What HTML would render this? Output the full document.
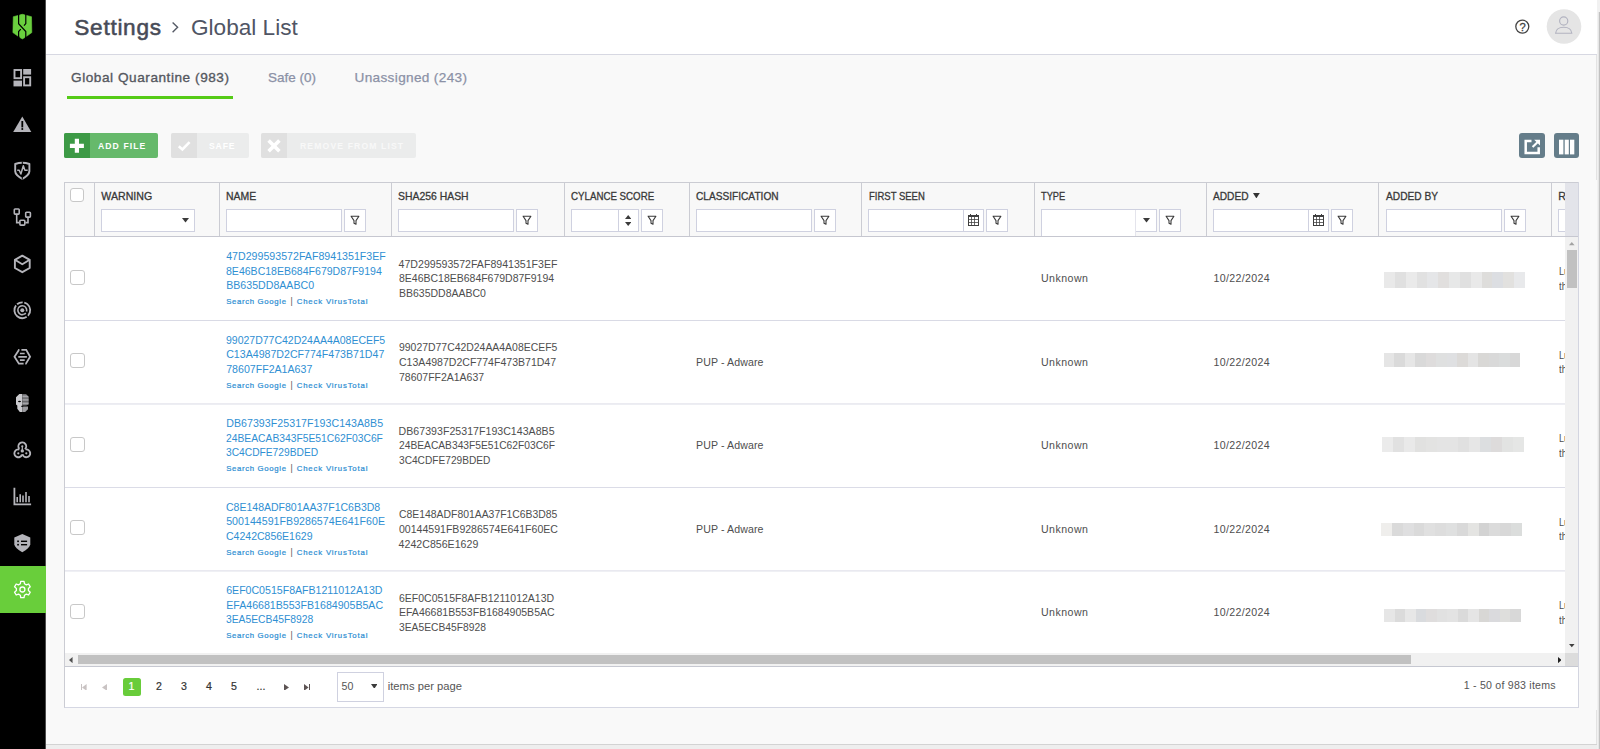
<!DOCTYPE html>
<html lang="en">
<head>
<meta charset="utf-8">
<title>Settings - Global List</title>
<style>
html,body{margin:0;padding:0;}
body{width:1600px;height:749px;overflow:hidden;position:relative;background:#f9f9f9;font-family:"Liberation Sans", sans-serif;}
.t{position:absolute;white-space:nowrap;line-height:20px;transform-origin:0 50%;}
.a{position:absolute;box-sizing:border-box;}

#side{left:0;top:0;width:45px;height:749px;background:#000;border-right:1px solid #4d4d4d;box-sizing:content-box;}
#side .act{left:0;top:566px;width:46px;height:47px;background:#69ce3b;}
#hdr{left:46px;top:0;width:1551px;height:55px;background:#fff;border-bottom:1px solid #d7d8e2;}
#pscroll{left:1597px;top:0;width:3px;height:749px;background:#f1f1f1;}
#pscroll i{position:absolute;left:1px;top:12px;width:2px;height:737px;background:linear-gradient(90deg,#e6e6e6 50%,#c1c1c1 50%);}
#cedge{left:1596px;top:55px;width:1px;height:689px;background:#e3e3e3;}
#foot{left:46px;top:744px;width:1551px;height:5px;border-top:1px solid #d3d3d3;background:#eeeeee;}
#tabline{left:67px;top:96px;width:165.6px;height:3px;background:#55cb17;}
.btn{top:133px;height:25px;border-radius:2px;overflow:hidden;}
.btn i{position:absolute;left:0;top:0;width:26px;height:25px;}
#grid{left:64px;top:182px;width:1515px;height:526px;border:1px solid #cbccd3;border-bottom-color:#d5d7e3;background:#fff;}
#ghead{left:65px;top:183px;width:1500px;height:53px;background:#f8f8f8;}
#gheadline{left:65px;top:236px;width:1513px;height:1px;background:#c6c7d0;}
#gspacer{left:1565px;top:183px;width:13px;height:53px;background:#e3e4ea;}
.cb{width:1px;top:183px;height:53px;background:#cbccd3;}
.rl{left:65px;width:1500px;height:1px;background:#dddde7;}
.chk{left:70px;width:15px;height:15px;border:1px solid #c8c8c8;border-radius:3px;background:#fff;}
.inp{top:209px;height:23px;background:#fff;border:1px solid #cfd1e0;}
.fb{top:209px;height:23px;width:22px;background:#fff;border:1px solid #cfd1e0;}
.fb svg{position:absolute;left:5px;top:5px;}
.px{position:absolute;top:0;height:100%;}
#vscroll{left:1565px;top:237px;width:13px;height:416px;background:#f1f1f1;}
#vscroll i{position:absolute;left:2px;top:13px;width:9.5px;height:38px;background:#c1c1c1;}
#hscroll{left:65px;top:653px;width:1500px;height:13px;background:#f1f1f1;}
#hscroll i{position:absolute;left:13px;top:2px;width:1333px;height:9px;background:#c1c1c1;}
#corner{left:1565px;top:653px;width:13px;height:13px;background:#dcdcdc;}
#pgline{left:65px;top:666px;width:1513px;height:1px;background:#c6c8d1;}
#pg1{left:122.5px;top:677.5px;width:18px;height:18px;border-radius:2.5px;background:#68cc3a;}
#pgsel{left:337px;top:672px;width:47px;height:30px;border:1px solid #cfd1e0;background:#fff;}

</style>
</head>
<body>
<div id="side" class="a"><div class="act a"></div></div>
<div id="hdr" class="a"></div>
<div id="foot" class="a"></div>
<div id="cedge" class="a"></div><div id="pscroll" class="a"><i></i></div>
<div id="tabline" class="a"></div>
<div class="a btn" style="left:64px;width:94px;background:#66b96b"><i style="background:#3d9a46"></i></div>
<div class="a btn" style="left:171px;width:78px;background:#ebecec"><i style="background:#e0e0e0"></i></div>
<div class="a btn" style="left:261px;width:155px;background:#ebecec"><i style="background:#e0e0e0"></i></div>
<div class="a" style="left:1519px;top:133px;width:26px;height:25px;border-radius:3px;background:#657d8a"></div>
<div class="a" style="left:1554px;top:133px;width:25px;height:25px;border-radius:3px;background:#657d8a"></div>
<div id="grid" class="a"></div><div id="ghead" class="a"></div>
<div class="a cb" style="left:94px"></div>
<div class="a cb" style="left:219px"></div>
<div class="a cb" style="left:391px"></div>
<div class="a cb" style="left:564px"></div>
<div class="a cb" style="left:689px"></div>
<div class="a cb" style="left:861px"></div>
<div class="a cb" style="left:1034px"></div>
<div class="a cb" style="left:1206px"></div>
<div class="a cb" style="left:1378px"></div>
<div class="a cb" style="left:1551px"></div>
<div id="gheadline" class="a"></div>
<div class="a rl" style="top:320px;background:#d9dae5"></div>
<div class="a rl" style="top:403px;background:#ebebf1"></div>
<div class="a rl" style="top:404px;background:#edeef3"></div>
<div class="a rl" style="top:487px;background:#dbdce7"></div>
<div class="a rl" style="top:570px;background:#e9e9f0"></div>
<div class="a rl" style="top:571px;background:#eff0f4"></div>
<div class="a chk" style="top:188px;width:14px;height:14px"></div>
<div class="a chk" style="top:269.8px"></div>
<div class="a chk" style="top:353.3px"></div>
<div class="a chk" style="top:436.8px"></div>
<div class="a chk" style="top:520.4px"></div>
<div class="a chk" style="top:603.9px"></div>
<div class="a inp" style="left:101px;width:94px"></div><svg class="a" style="left:181.9px;top:218.3px" width="7" height="4.5" viewBox="0 0 7 4.5"><path d="M0 0h7L3.5 4.5z" fill="#3b3b3b"/></svg>
<div class="a inp" style="left:226px;width:116px"></div><div class="a fb" style="left:344px"><svg width="10" height="11" viewBox="0 0 10 11"><path d="M1.1 1.2h7.8L6 5.6v3.6L4 8.2V5.6z" fill="none" stroke="#3a3a3a" stroke-width="1.1" stroke-linejoin="round"/></svg></div>
<div class="a inp" style="left:398px;width:116px"></div><div class="a fb" style="left:516px"><svg width="10" height="11" viewBox="0 0 10 11"><path d="M1.1 1.2h7.8L6 5.6v3.6L4 8.2V5.6z" fill="none" stroke="#3a3a3a" stroke-width="1.1" stroke-linejoin="round"/></svg></div>
<div class="a inp" style="left:696px;width:116px"></div><div class="a fb" style="left:814px"><svg width="10" height="11" viewBox="0 0 10 11"><path d="M1.1 1.2h7.8L6 5.6v3.6L4 8.2V5.6z" fill="none" stroke="#3a3a3a" stroke-width="1.1" stroke-linejoin="round"/></svg></div>
<div class="a inp" style="left:1386px;width:116px"></div><div class="a fb" style="left:1504px"><svg width="10" height="11" viewBox="0 0 10 11"><path d="M1.1 1.2h7.8L6 5.6v3.6L4 8.2V5.6z" fill="none" stroke="#3a3a3a" stroke-width="1.1" stroke-linejoin="round"/></svg></div>
<div class="a inp" style="left:571px;width:68px"><div class="px" style="left:46px;width:1px;background:#cfd1e0"></div></div>
<svg class="a" style="left:625.1px;top:214.5px" width="6.4" height="4" viewBox="0 0 6.4 4"><path d="M0 4h6.4L3.2 0z" fill="#3b3b3b"/></svg>
<svg class="a" style="left:625.1px;top:222.3px" width="6.4" height="4" viewBox="0 0 6.4 4"><path d="M0 0h6.4L3.2 4z" fill="#3b3b3b"/></svg>
<div class="a fb" style="left:641px"><svg width="10" height="11" viewBox="0 0 10 11"><path d="M1.1 1.2h7.8L6 5.6v3.6L4 8.2V5.6z" fill="none" stroke="#3a3a3a" stroke-width="1.1" stroke-linejoin="round"/></svg></div>
<div class="a inp" style="left:868px;width:116px"><div class="px" style="left:94px;width:1px;background:#cfd1e0"></div></div>
<svg class="a" style="left:968px;top:214px" width="11" height="12" viewBox="0 0 11 12"><rect x="0.5" y="1.5" width="10" height="10" fill="#fff" stroke="#3f3f3f" stroke-width="1"/><rect x="0.5" y="1" width="10" height="2" fill="#3f3f3f"/><path d="M0.5 5.5h10M0.5 8.5h10M3.5 3v8.5M6.5 3v8.5" stroke="#3f3f3f" stroke-width="0.9" fill="none" opacity=".85"/><path d="M2.5 0v2M8.5 0v2" stroke="#3f3f3f" stroke-width="1"/></svg>
<div class="a fb" style="left:986px"><svg width="10" height="11" viewBox="0 0 10 11"><path d="M1.1 1.2h7.8L6 5.6v3.6L4 8.2V5.6z" fill="none" stroke="#3a3a3a" stroke-width="1.1" stroke-linejoin="round"/></svg></div>
<div class="a inp" style="left:1213px;width:116px"><div class="px" style="left:94px;width:1px;background:#cfd1e0"></div></div>
<svg class="a" style="left:1313px;top:214px" width="11" height="12" viewBox="0 0 11 12"><rect x="0.5" y="1.5" width="10" height="10" fill="#fff" stroke="#3f3f3f" stroke-width="1"/><rect x="0.5" y="1" width="10" height="2" fill="#3f3f3f"/><path d="M0.5 5.5h10M0.5 8.5h10M3.5 3v8.5M6.5 3v8.5" stroke="#3f3f3f" stroke-width="0.9" fill="none" opacity=".85"/><path d="M2.5 0v2M8.5 0v2" stroke="#3f3f3f" stroke-width="1"/></svg>
<div class="a fb" style="left:1331px"><svg width="10" height="11" viewBox="0 0 10 11"><path d="M1.1 1.2h7.8L6 5.6v3.6L4 8.2V5.6z" fill="none" stroke="#3a3a3a" stroke-width="1.1" stroke-linejoin="round"/></svg></div>
<div class="a inp" style="left:1041px;width:116px"></div>
<div class="a" style="left:1041px;top:210px;width:95px;height:26px;background:#fff;border-left:1px solid #cfd1e0;border-right:1px solid #e4e4ec"></div>
<svg class="a" style="left:1143.0px;top:218.3px" width="7" height="4.5" viewBox="0 0 7 4.5"><path d="M0 0h7L3.5 4.5z" fill="#3b3b3b"/></svg>
<div class="a fb" style="left:1159px"><svg width="10" height="11" viewBox="0 0 10 11"><path d="M1.1 1.2h7.8L6 5.6v3.6L4 8.2V5.6z" fill="none" stroke="#3a3a3a" stroke-width="1.1" stroke-linejoin="round"/></svg></div>
<div class="a inp" style="left:1558px;width:30px;border-right:0"></div>
<svg class="a" style="left:1252.9px;top:193.1px" width="6.8" height="5.4" viewBox="0 0 6.8 5.4"><path d="M0 0h6.8L3.4 5.4z" fill="#333"/></svg>
<div class="a" style="left:1383.8px;top:272.2px;width:141.2px;height:15.6px;background:linear-gradient(90deg,#e9e9e9 0.00%,#e9e9e9 7.69%,#e0e0e0 7.69%,#e0e0e0 15.38%,#eaeaea 15.38%,#eaeaea 23.08%,#e1e1e1 23.08%,#e1e1e1 30.77%,#e5e6e8 30.77%,#e5e6e8 38.46%,#e1dfde 38.46%,#e1dfde 46.15%,#e7e8e8 46.15%,#e7e8e8 53.85%,#e0e0e0 53.85%,#e0e0e0 61.54%,#e9e9e9 61.54%,#e9e9e9 69.23%,#dedddb 69.23%,#dedddb 76.92%,#dcdee2 76.92%,#dcdee2 84.62%,#e2e1df 84.62%,#e2e1df 92.31%,#e8e9eb 92.31%,#e8e9eb 100.00%)"></div>
<div class="a" style="left:1383.8px;top:353.0px;width:136.2px;height:14.0px;background:linear-gradient(90deg,#e5e5e5 0.00%,#e5e5e5 7.69%,#dadada 7.69%,#dadada 15.38%,#e6e6e6 15.38%,#e6e6e6 23.08%,#d9d9d9 23.08%,#d9d9d9 30.77%,#dedcdc 30.77%,#dedcdc 38.46%,#dfe0e0 38.46%,#dfe0e0 46.15%,#dfe0e2 46.15%,#dfe0e2 53.85%,#dcdad8 53.85%,#dcdad8 61.54%,#e4e4e4 61.54%,#e4e4e4 69.23%,#d9d8d6 69.23%,#d9d8d6 76.92%,#d9d9d9 76.92%,#d9d9d9 84.62%,#dadcdc 84.62%,#dadcdc 92.31%,#d8d8d8 92.31%,#d8d8d8 100.00%)"></div>
<div class="a" style="left:1382.0px;top:437.0px;width:142.0px;height:15.2px;background:linear-gradient(90deg,#ebebeb 0.00%,#ebebeb 7.69%,#e1e1e1 7.69%,#e1e1e1 15.38%,#e9e9e9 15.38%,#e9e9e9 23.08%,#e1e1e0 23.08%,#e1e1e0 30.77%,#e3e3e2 30.77%,#e3e3e2 38.46%,#e4e4e4 38.46%,#e4e4e4 46.15%,#e4e4e4 46.15%,#e4e4e4 53.85%,#e0e0e0 53.85%,#e0e0e0 61.54%,#e6e6e6 61.54%,#e6e6e6 69.23%,#dcdee0 69.23%,#dcdee0 76.92%,#dddbdb 76.92%,#dddbdb 84.62%,#e2e3e2 84.62%,#e2e3e2 92.31%,#e5e6e5 92.31%,#e5e6e5 100.00%)"></div>
<div class="a" style="left:1381.0px;top:523.0px;width:141.2px;height:12.8px;background:linear-gradient(90deg,#efeeec 0.00%,#efeeec 7.69%,#dadada 7.69%,#dadada 15.38%,#dfdfe0 15.38%,#dfdfe0 23.08%,#dadada 23.08%,#dadada 30.77%,#e0e0e0 30.77%,#e0e0e0 38.46%,#dddddd 38.46%,#dddddd 46.15%,#dfe0e0 46.15%,#dfe0e0 53.85%,#d9d9d9 53.85%,#d9d9d9 61.54%,#e4e4e2 61.54%,#e4e4e2 69.23%,#d3d3d3 69.23%,#d3d3d3 76.92%,#dbdbdb 76.92%,#dbdbdb 84.62%,#d8d8d8 84.62%,#d8d8d8 92.31%,#dbdddc 92.31%,#dbdddc 100.00%)"></div>
<div class="a" style="left:1384.0px;top:608.5px;width:136.8px;height:13.5px;background:linear-gradient(90deg,#e6e6e6 0.00%,#e6e6e6 7.69%,#dbdbdb 7.69%,#dbdbdb 15.38%,#e7e7e7 15.38%,#e7e7e7 23.08%,#d9dbde 23.08%,#d9dbde 30.77%,#dfdddd 30.77%,#dfdddd 38.46%,#e1e1e1 38.46%,#e1e1e1 46.15%,#e3e3e3 46.15%,#e3e3e3 53.85%,#dadada 53.85%,#dadada 61.54%,#e5e5e5 61.54%,#e5e5e5 69.23%,#d8d7d5 69.23%,#d8d7d5 76.92%,#dadadd 76.92%,#dadadd 84.62%,#dededc 84.62%,#dededc 92.31%,#d8d8d8 92.31%,#d8d8d8 100.00%)"></div>
<div id="pgline" class="a"></div><div id="pg1" class="a"></div><div id="pgsel" class="a"></div>
<svg class="a" style="left:370.7px;top:683.7px" width="6.6" height="4.8" viewBox="0 0 6.6 4.8"><path d="M0 0h6.6L3.3 4.8z" fill="#3b3b3b"/></svg>
<div class="a" style="left:80.6px;top:683.6px;width:1.3px;height:6.8px;background:#c9c3c3"></div><svg class="a" style="left:82.4px;top:683.6px" width="4.6" height="6.8" viewBox="0 0 4.6 6.8"><path d="M4.6 0L0 3.4L4.6 6.8z" fill="#c9c3c3"/></svg>
<svg class="a" style="left:102.2px;top:683.6px" width="5" height="6.8" viewBox="0 0 5 6.8"><path d="M5 0L0 3.4L5 6.8z" fill="#c9c3c3"/></svg>
<svg class="a" style="left:284.3px;top:683.6px" width="5" height="6.8" viewBox="0 0 5 6.8"><path d="M0 0L5 3.4L0 6.8z" fill="#5d5454"/></svg>
<svg class="a" style="left:304.2px;top:683.6px" width="4.6" height="6.8" viewBox="0 0 4.6 6.8"><path d="M0 0L4.6 3.4L0 6.8z" fill="#5d5454"/></svg><div class="a" style="left:309.2px;top:683.6px;width:1.3px;height:6.8px;background:#5d5454"></div>
<svg class="a" style="left:8px;top:10px" width="30" height="32" viewBox="8 10 30 32" ><path d="M13.3 16.7L17.9 15.5L19.2 15.2Q22.4 13.4 25.5 15.2L26.8 15.5L31.5 16.7L31.8 32.6L26.6 36.3L25.7 36.3Q25.6 37.6 22.4 38.9Q19.2 37.6 19.1 36.3L18.2 36.3L12.9 32.6z" fill="#6ad03e" stroke="#6ad03e" stroke-width=".6" stroke-linejoin="round"/><path d="M18.6 14V23.7L25.8 31.6V39" fill="none" stroke="#000" stroke-width="1.2"/><path d="M25.8 14V23.6L24 25.7M20.8 29.1L18.6 31.5V39" fill="none" stroke="#000" stroke-width="1.2"/></svg>
<svg class="a" style="left:10px;top:66px" width="26" height="24" viewBox="10 66 26 24" ><rect x="14.5" y="70" width="6.6" height="8.2" fill="none" stroke="#b4b4ba" stroke-width="1.9"/><rect x="23.2" y="69" width="7.9" height="5.6" fill="#b4b4ba"/><rect x="13.5" y="80.6" width="8.5" height="5.8" fill="#b4b4ba"/><rect x="24.1" y="77.2" width="6.1" height="8.2" fill="none" stroke="#b4b4ba" stroke-width="1.9"/></svg>
<svg class="a" style="left:10px;top:112px" width="26" height="24" viewBox="10 112 26 24" ><path d="M22.3 116.6L31.3 131.9H13.2z" fill="#b4b4ba"/><rect x="21.4" y="121" width="1.8" height="6.4" fill="#000"/><circle cx="22.3" cy="129" r="1.05" fill="#000"/></svg>
<svg class="a" style="left:10px;top:158px" width="26" height="26" viewBox="10 158 26 26" ><path d="M15.2 164Q22.3 161.6 29.4 164V171.4Q29.2 175 22.3 178.8Q15.4 175 15.2 171.4z" fill="none" stroke="#b4b4ba" stroke-width="1.9" stroke-linejoin="round"/><path d="M22.3 161.5v2.6M22.3 177v2.6" stroke="#000" stroke-width="1"/><path d="M17.2 170.3h2L20.9 174L23.3 165.8L24.9 170.3h2.8" fill="none" stroke="#b4b4ba" stroke-width="1.5" stroke-linejoin="round"/></svg>
<svg class="a" style="left:10px;top:204px" width="26" height="26" viewBox="10 204 26 26" ><rect x="14.3" y="209" width="4.9" height="5.1" rx=".8" fill="none" stroke="#b4b4ba" stroke-width="1.6"/><rect x="25.7" y="212.2" width="4.7" height="4.9" rx=".8" fill="none" stroke="#b4b4ba" stroke-width="1.6"/><rect x="19.9" y="220.2" width="4.9" height="4.9" rx=".8" fill="none" stroke="#b4b4ba" stroke-width="1.6"/><path d="M16.7 214.9V222.6H19.5M28 217.8V222.6H25.3" fill="none" stroke="#b4b4ba" stroke-width="1.6"/></svg>
<svg class="a" style="left:10px;top:251px" width="26" height="26" viewBox="10 251 26 26" ><path d="M22.3 255.6L29.7 259.8V268L22.3 272.2L14.9 268V259.8z" fill="none" stroke="#b4b4ba" stroke-width="1.9" stroke-linejoin="round"/><path d="M14.9 259.8L22.3 264.2L29.7 259.8" fill="none" stroke="#b4b4ba" stroke-width="1.9" stroke-linejoin="round"/></svg>
<svg class="a" style="left:10px;top:298px" width="26" height="26" viewBox="10 298 26 26" ><circle cx="22.3" cy="310.2" r="7.9" fill="none" stroke="#b4b4ba" stroke-width="1.8" stroke-dasharray="13 1.6 22 1.6 6 1.6 3.8 100" transform="rotate(-50 22.3 310.2)"/><circle cx="22.3" cy="310.2" r="4.4" fill="none" stroke="#b4b4ba" stroke-width="1.6" stroke-dasharray="23 1.5 2.2 100" transform="rotate(70 22.3 310.2)"/><circle cx="22.3" cy="310.2" r="2" fill="#b4b4ba"/></svg>
<svg class="a" style="left:10px;top:344px" width="26" height="26" viewBox="10 344 26 26" ><path d="M19.4 349.9H18.9L14.5 356.7L18.9 363.7H23.6M25.2 363.7H25.9L30.1 356.7L26.2 349.9H21.4" fill="none" stroke="#b4b4ba" stroke-width="1.8"/><path d="M19.9 353.5H24.7M18.3 356.8H26.9M19.9 360.1H24.7" fill="none" stroke="#b4b4ba" stroke-width="1.7"/></svg>
<svg class="a" style="left:10px;top:390px" width="26" height="26" viewBox="10 390 26 26" ><defs><pattern id="stp" width="2" height="1.4" patternUnits="userSpaceOnUse"><rect width="2" height=".8" fill="#a9a9ad"/><rect y=".8" width="2" height=".6" fill="#6f6f73"/></pattern></defs><path d="M22.3 394H19.3L16 397.2V404.4L17.3 405.6V408.8L19.8 412H22.3z" fill="#cacace"/><path d="M22.3 394H26L28.7 396.8V404.6L26.2 405.4H22.3z" fill="url(#stp)"/><path d="M22.3 406.4H28V409.2L25.2 412H22.3z" fill="#9b9b9f"/><ellipse cx="19.5" cy="401.5" rx="1.5" ry=".8" fill="#000"/><rect x="21.2" y="405.8" width="2" height="1" fill="#000"/></svg>
<svg class="a" style="left:10px;top:438px" width="26" height="26" viewBox="10 438 26 26" ><circle cx="22.3" cy="446.3" r="3.9" fill="none" stroke="#b4b4ba" stroke-width="1.9" stroke-dasharray="17.7 100" transform="rotate(140 22.3 446.3)"/><circle cx="18.3" cy="453.3" r="3.9" fill="none" stroke="#b4b4ba" stroke-width="1.9" stroke-dasharray="17.7 100" transform="rotate(19 18.3 453.3)"/><circle cx="26.3" cy="453.3" r="3.9" fill="none" stroke="#b4b4ba" stroke-width="1.9" stroke-dasharray="17.7 100" transform="rotate(261 26.3 453.3)"/><circle cx="22.3" cy="446.3" r="1.1" fill="#b4b4ba"/><circle cx="18.3" cy="453.3" r="1.1" fill="#b4b4ba"/><circle cx="26.3" cy="453.3" r="1.1" fill="#b4b4ba"/><path d="M22.3 446.3V450.9" stroke="#b4b4ba" stroke-width="1.2"/><circle cx="22.3" cy="450.9" r="1.7" fill="#b4b4ba"/></svg>
<svg class="a" style="left:10px;top:484px" width="26" height="26" viewBox="10 484 26 26" ><path d="M14.4 487.8V504.3H31.1" fill="none" stroke="#b4b4ba" stroke-width="1.8"/><path d="M17.2 497.1V502.2M20.2 494.2V502.2M23 495.5V502.2M26 492V502.2M29 496V502.2" stroke="#b4b4ba" stroke-width="1.6"/></svg>
<svg class="a" style="left:10px;top:530px" width="26" height="26" viewBox="10 530 26 26" ><path d="M22.3 534L30.3 537.6V544.5Q29.6 548.2 22.3 552.2Q15 548.2 14.3 544.5V537.6z" fill="#b4b4ba"/><rect x="17.2" y="540.5" width="1.7" height="1.6" fill="#000"/><rect x="17.2" y="543.9" width="1.7" height="1.6" fill="#000"/><rect x="21" y="540.6" width="6.1" height="1.4" fill="#000"/><rect x="21" y="544" width="6.1" height="1.4" fill="#000"/></svg>
<svg class="a" style="left:10px;top:577px" width="26" height="26" viewBox="10 577 26 26" ><path d="M20.35 583.76L20.75 581.37L24.05 581.37L24.45 583.76L26.35 584.85L28.62 584.00L30.27 586.86L28.40 588.41L28.40 590.59L30.27 592.14L28.62 595.00L26.35 594.15L24.45 595.24L24.05 597.63L20.75 597.63L20.35 595.24L18.45 594.15L16.18 595.00L14.53 592.14L16.40 590.59L16.40 588.41L14.53 586.86L16.18 584.00L18.45 584.85z" fill="none" stroke="#fff" stroke-width="1.3" stroke-linejoin="round"/><circle cx="22.4" cy="589.5" r="2.5" fill="none" stroke="#fff" stroke-width="1.3"/></svg>
<svg class="a" style="left:168px;top:18px" width="14" height="18" viewBox="168 18 14 18" ><path d="M172.6 22.4L177.6 27.3L172.6 32.2" fill="none" stroke="#555a66" stroke-width="1.4"/></svg>
<svg class="a" style="left:1512px;top:16px" width="22" height="22" viewBox="1512 16 22 22" ><circle cx="1522.3" cy="26.6" r="6.5" fill="none" stroke="#444" stroke-width="1.3"/></svg>
<svg class="a" style="left:1545px;top:8px" width="38" height="38" viewBox="1545 8 38 38" ><circle cx="1564" cy="26.5" r="17.3" fill="#e5e5e5"/><circle cx="1563.7" cy="21" r="4.1" fill="none" stroke="#b2b3c0" stroke-width="1.15"/><path d="M1555.6 33.2Q1556.2 27.2 1563.7 27.2Q1571.2 27.2 1571.8 33.2z" fill="none" stroke="#b2b3c0" stroke-width="1.15"/></svg>
<svg class="a" style="left:64px;top:133px" width="26" height="25" viewBox="64 133 26 25" ><path d="M74.8 138.8h4.2v4.9h4.9v4.2h-4.9v4.9h-4.2v-4.9h-4.9v-4.2h4.9z" fill="#fff"/></svg>
<svg class="a" style="left:171px;top:133px" width="26" height="25" viewBox="171 133 26 25" ><path d="M178.8 146.2L182.4 149.4L189.6 142.2" fill="none" stroke="#fff" stroke-width="2.6"/></svg>
<svg class="a" style="left:261px;top:133px" width="26" height="25" viewBox="261 133 26 25" ><path d="M268.6 140.4L279.4 151.2M279.4 140.4L268.6 151.2" fill="none" stroke="#fff" stroke-width="3.6"/></svg>
<svg class="a" style="left:1519px;top:133px" width="26" height="25" viewBox="1519 133 26 25" ><path d="M1531.5 141H1525.7V153.1H1538.7V147.2" fill="none" stroke="#fff" stroke-width="2.5"/><path d="M1534.2 139.7H1540V145.5z" fill="#fff"/><path d="M1532.6 147L1538.5 141.2" stroke="#fff" stroke-width="2.2"/></svg>
<svg class="a" style="left:1554px;top:133px" width="25" height="25" viewBox="1554 133 25 25" ><rect x="1559" y="139.7" width="4.4" height="14.7" fill="#fff"/><rect x="1564.7" y="139.7" width="4.1" height="14.7" fill="#fff"/><rect x="1570" y="139.7" width="4.3" height="14.7" fill="#fff"/></svg>
<div id="texts">
<span class="t" style="left:74.30px;top:17.80px;font-size:22.6px;color:#474b57;letter-spacing:0.723px;-webkit-text-stroke:0.55px #474b57;">Settings</span>
<span class="t" style="left:191.00px;top:17.30px;font-size:22.8px;color:#505564;transform:scaleX(0.9915);">Global List</span>
<span class="t" style="left:71.00px;top:68.00px;font-size:13.6px;color:#555860;letter-spacing:0.553px;-webkit-text-stroke:0.35px #555860;">Global Quarantine (983)</span>
<span class="t" style="left:267.70px;top:68.00px;font-size:13.6px;color:#8b91a6;transform:scaleX(0.9926);-webkit-text-stroke:0.25px #8b91a6;">Safe (0)</span>
<span class="t" style="left:354.50px;top:68.00px;font-size:13.6px;color:#8b91a6;letter-spacing:0.346px;-webkit-text-stroke:0.25px #8b91a6;">Unassigned (243)</span>
<span class="t" style="left:97.90px;top:135.50px;font-size:9.8px;color:#ffffff;font-weight:700;transform:scaleX(0.8800);letter-spacing:1.234px;">ADD FILE</span>
<span class="t" style="left:209.20px;top:135.50px;font-size:9.8px;color:#ffffff;font-weight:700;transform:scaleX(0.8800);letter-spacing:0.964px;">SAFE</span>
<span class="t" style="left:299.60px;top:135.50px;font-size:9.8px;color:#f8f8f8;font-weight:700;transform:scaleX(0.8800);letter-spacing:1.282px;">REMOVE FROM LIST</span>
<span class="t" style="left:101.25px;top:185.80px;font-size:10.6px;color:#383838;letter-spacing:0.031px;-webkit-text-stroke:0.3px #383838;">WARNING</span>
<span class="t" style="left:226.40px;top:185.80px;font-size:10.6px;color:#383838;transform:scaleX(0.9866);-webkit-text-stroke:0.3px #383838;">NAME</span>
<span class="t" style="left:398.40px;top:185.80px;font-size:10.6px;color:#383838;transform:scaleX(0.9827);-webkit-text-stroke:0.3px #383838;">SHA256 HASH</span>
<span class="t" style="left:571.25px;top:185.80px;font-size:10.6px;color:#383838;transform:scaleX(0.9170);-webkit-text-stroke:0.3px #383838;">CYLANCE SCORE</span>
<span class="t" style="left:696.40px;top:185.80px;font-size:10.6px;color:#383838;transform:scaleX(0.9566);-webkit-text-stroke:0.3px #383838;">CLASSIFICATION</span>
<span class="t" style="left:868.60px;top:185.80px;font-size:10.6px;color:#383838;transform:scaleX(0.8971);-webkit-text-stroke:0.3px #383838;">FIRST SEEN</span>
<span class="t" style="left:1041.00px;top:185.80px;font-size:10.6px;color:#383838;transform:scaleX(0.8763);-webkit-text-stroke:0.3px #383838;">TYPE</span>
<span class="t" style="left:1213.40px;top:185.80px;font-size:10.6px;color:#383838;transform:scaleX(0.9597);-webkit-text-stroke:0.3px #383838;">ADDED</span>
<span class="t" style="left:1386.00px;top:185.80px;font-size:10.6px;color:#383838;transform:scaleX(0.9599);-webkit-text-stroke:0.3px #383838;">ADDED BY</span>
<span class="t" style="left:1558.30px;top:185.80px;font-size:10.6px;color:#383838;-webkit-text-stroke:0.3px #383838;">R</span>
<span class="t" style="left:226.20px;top:246.25px;font-size:10.6px;color:#2f8fd3;letter-spacing:0.023px;">47D299593572FAF8941351F3EF</span>
<span class="t" style="left:226.20px;top:260.75px;font-size:10.6px;color:#2f8fd3;transform:scaleX(0.9944);">8E46BC18EB684F679D87F9194</span>
<span class="t" style="left:226.20px;top:275.25px;font-size:10.6px;color:#2f8fd3;letter-spacing:0.013px;">BB635DD8AABC0</span>
<span class="t" style="left:226.20px;top:292.10px;font-size:7.8px;color:#2f8fd3;letter-spacing:0.649px;-webkit-text-stroke:0.22px #2f8fd3;">Search Google</span>
<span class="t" style="left:290.50px;top:291.20px;font-size:8.6px;color:#555;">|</span>
<span class="t" style="left:296.70px;top:292.10px;font-size:7.8px;color:#2f8fd3;letter-spacing:0.823px;-webkit-text-stroke:0.22px #2f8fd3;">Check VirusTotal</span>
<span class="t" style="left:398.60px;top:253.80px;font-size:10.6px;color:#4e4e4e;letter-spacing:-0.005px;">47D299593572FAF8941351F3EF</span>
<span class="t" style="left:398.60px;top:268.40px;font-size:10.6px;color:#4e4e4e;transform:scaleX(0.9900);">8E46BC18EB684F679D87F9194</span>
<span class="t" style="left:398.60px;top:283.00px;font-size:10.6px;color:#4e4e4e;transform:scaleX(0.9903);">BB635DD8AABC0</span>
<span class="t" style="left:1040.90px;top:268.40px;font-size:10.6px;color:#4e4e4e;letter-spacing:0.488px;">Unknown</span>
<span class="t" style="left:1213.60px;top:268.40px;font-size:10.6px;color:#4e4e4e;letter-spacing:0.341px;">10/22/2024</span>
<span class="t clipr" style="left:1558.50px;top:261.10px;font-size:10.6px;color:#4e4e4e;transform:scaleX(0.8562);">Lu</span>
<span class="t clipr" style="left:1558.50px;top:275.60px;font-size:10.6px;color:#4e4e4e;transform:scaleX(0.8933);">th</span>
<span class="t" style="left:226.20px;top:329.77px;font-size:10.6px;color:#2f8fd3;transform:scaleX(0.9902);">99027D77C42D24AA4A08ECEF5</span>
<span class="t" style="left:226.20px;top:344.27px;font-size:10.6px;color:#2f8fd3;letter-spacing:0.011px;">C13A4987D2CF774F473B71D47</span>
<span class="t" style="left:226.20px;top:358.77px;font-size:10.6px;color:#2f8fd3;letter-spacing:0.008px;">78607FF2A1A637</span>
<span class="t" style="left:226.20px;top:375.62px;font-size:7.8px;color:#2f8fd3;letter-spacing:0.649px;-webkit-text-stroke:0.22px #2f8fd3;">Search Google</span>
<span class="t" style="left:290.50px;top:374.72px;font-size:8.6px;color:#555;">|</span>
<span class="t" style="left:296.70px;top:375.62px;font-size:7.8px;color:#2f8fd3;letter-spacing:0.823px;-webkit-text-stroke:0.22px #2f8fd3;">Check VirusTotal</span>
<span class="t" style="left:398.60px;top:337.32px;font-size:10.6px;color:#4e4e4e;transform:scaleX(0.9846);">99027D77C42D24AA4A08ECEF5</span>
<span class="t" style="left:398.60px;top:351.92px;font-size:10.6px;color:#4e4e4e;transform:scaleX(0.9953);">C13A4987D2CF774F473B71D47</span>
<span class="t" style="left:398.60px;top:366.52px;font-size:10.6px;color:#4e4e4e;transform:scaleX(0.9895);">78607FF2A1A637</span>
<span class="t" style="left:696.00px;top:351.92px;font-size:10.6px;color:#4e4e4e;letter-spacing:0.105px;">PUP - Adware</span>
<span class="t" style="left:1040.90px;top:351.92px;font-size:10.6px;color:#4e4e4e;letter-spacing:0.488px;">Unknown</span>
<span class="t" style="left:1213.60px;top:351.92px;font-size:10.6px;color:#4e4e4e;letter-spacing:0.341px;">10/22/2024</span>
<span class="t clipr" style="left:1558.50px;top:344.62px;font-size:10.6px;color:#4e4e4e;transform:scaleX(0.8562);">Lu</span>
<span class="t clipr" style="left:1558.50px;top:359.12px;font-size:10.6px;color:#4e4e4e;transform:scaleX(0.8933);">th</span>
<span class="t" style="left:226.20px;top:413.29px;font-size:10.6px;color:#2f8fd3;letter-spacing:0.058px;">DB67393F25317F193C143A8B5</span>
<span class="t" style="left:226.20px;top:427.79px;font-size:10.6px;color:#2f8fd3;transform:scaleX(0.9724);">24BEACAB343F5E51C62F03C6F</span>
<span class="t" style="left:226.20px;top:442.29px;font-size:10.6px;color:#2f8fd3;transform:scaleX(0.9655);">3C4CDFE729BDED</span>
<span class="t" style="left:226.20px;top:459.14px;font-size:7.8px;color:#2f8fd3;letter-spacing:0.649px;-webkit-text-stroke:0.22px #2f8fd3;">Search Google</span>
<span class="t" style="left:290.50px;top:458.24px;font-size:8.6px;color:#555;">|</span>
<span class="t" style="left:296.70px;top:459.14px;font-size:7.8px;color:#2f8fd3;letter-spacing:0.823px;-webkit-text-stroke:0.22px #2f8fd3;">Check VirusTotal</span>
<span class="t" style="left:398.60px;top:420.84px;font-size:10.6px;color:#4e4e4e;letter-spacing:0.021px;">DB67393F25317F193C143A8B5</span>
<span class="t" style="left:398.60px;top:435.44px;font-size:10.6px;color:#4e4e4e;transform:scaleX(0.9668);">24BEACAB343F5E51C62F03C6F</span>
<span class="t" style="left:398.60px;top:450.04px;font-size:10.6px;color:#4e4e4e;transform:scaleX(0.9582);">3C4CDFE729BDED</span>
<span class="t" style="left:696.00px;top:435.44px;font-size:10.6px;color:#4e4e4e;letter-spacing:0.105px;">PUP - Adware</span>
<span class="t" style="left:1040.90px;top:435.44px;font-size:10.6px;color:#4e4e4e;letter-spacing:0.488px;">Unknown</span>
<span class="t" style="left:1213.60px;top:435.44px;font-size:10.6px;color:#4e4e4e;letter-spacing:0.341px;">10/22/2024</span>
<span class="t clipr" style="left:1558.50px;top:428.14px;font-size:10.6px;color:#4e4e4e;transform:scaleX(0.8562);">Lu</span>
<span class="t clipr" style="left:1558.50px;top:442.64px;font-size:10.6px;color:#4e4e4e;transform:scaleX(0.8933);">th</span>
<span class="t" style="left:226.20px;top:496.81px;font-size:10.6px;color:#2f8fd3;transform:scaleX(0.9918);">C8E148ADF801AA37F1C6B3D8</span>
<span class="t" style="left:226.20px;top:511.31px;font-size:10.6px;color:#2f8fd3;letter-spacing:0.037px;">500144591FB9286574E641F60E</span>
<span class="t" style="left:226.20px;top:525.81px;font-size:10.6px;color:#2f8fd3;transform:scaleX(0.9921);">C4242C856E1629</span>
<span class="t" style="left:226.20px;top:542.66px;font-size:7.8px;color:#2f8fd3;letter-spacing:0.649px;-webkit-text-stroke:0.22px #2f8fd3;">Search Google</span>
<span class="t" style="left:290.50px;top:541.76px;font-size:8.6px;color:#555;">|</span>
<span class="t" style="left:296.70px;top:542.66px;font-size:7.8px;color:#2f8fd3;letter-spacing:0.823px;-webkit-text-stroke:0.22px #2f8fd3;">Check VirusTotal</span>
<span class="t" style="left:398.60px;top:504.36px;font-size:10.6px;color:#4e4e4e;transform:scaleX(0.9817);">C8E148ADF801AA37F1C6B3D85</span>
<span class="t" style="left:398.60px;top:518.96px;font-size:10.6px;color:#4e4e4e;transform:scaleX(0.9954);">00144591FB9286574E641F60EC</span>
<span class="t" style="left:398.60px;top:533.56px;font-size:10.6px;color:#4e4e4e;letter-spacing:0.014px;">4242C856E1629</span>
<span class="t" style="left:696.00px;top:518.96px;font-size:10.6px;color:#4e4e4e;letter-spacing:0.105px;">PUP - Adware</span>
<span class="t" style="left:1040.90px;top:518.96px;font-size:10.6px;color:#4e4e4e;letter-spacing:0.488px;">Unknown</span>
<span class="t" style="left:1213.60px;top:518.96px;font-size:10.6px;color:#4e4e4e;letter-spacing:0.341px;">10/22/2024</span>
<span class="t clipr" style="left:1558.50px;top:511.66px;font-size:10.6px;color:#4e4e4e;transform:scaleX(0.8562);">Lu</span>
<span class="t clipr" style="left:1558.50px;top:526.16px;font-size:10.6px;color:#4e4e4e;transform:scaleX(0.8933);">th</span>
<span class="t" style="left:226.20px;top:580.33px;font-size:10.6px;color:#2f8fd3;letter-spacing:-0.007px;">6EF0C0515F8AFB1211012A13D</span>
<span class="t" style="left:226.20px;top:594.83px;font-size:10.6px;color:#2f8fd3;letter-spacing:0.010px;">EFA46681B553FB1684905B5AC</span>
<span class="t" style="left:226.20px;top:609.33px;font-size:10.6px;color:#2f8fd3;transform:scaleX(0.9740);">3EA5ECB45F8928</span>
<span class="t" style="left:226.20px;top:626.18px;font-size:7.8px;color:#2f8fd3;letter-spacing:0.649px;-webkit-text-stroke:0.22px #2f8fd3;">Search Google</span>
<span class="t" style="left:290.50px;top:625.28px;font-size:8.6px;color:#555;">|</span>
<span class="t" style="left:296.70px;top:626.18px;font-size:7.8px;color:#2f8fd3;letter-spacing:0.823px;-webkit-text-stroke:0.22px #2f8fd3;">Check VirusTotal</span>
<span class="t" style="left:398.60px;top:587.88px;font-size:10.6px;color:#4e4e4e;transform:scaleX(0.9913);">6EF0C0515F8AFB1211012A13D</span>
<span class="t" style="left:398.60px;top:602.48px;font-size:10.6px;color:#4e4e4e;transform:scaleX(0.9932);">EFA46681B553FB1684905B5AC</span>
<span class="t" style="left:398.60px;top:617.08px;font-size:10.6px;color:#4e4e4e;transform:scaleX(0.9706);">3EA5ECB45F8928</span>
<span class="t" style="left:1040.90px;top:602.48px;font-size:10.6px;color:#4e4e4e;letter-spacing:0.488px;">Unknown</span>
<span class="t" style="left:1213.60px;top:602.48px;font-size:10.6px;color:#4e4e4e;letter-spacing:0.341px;">10/22/2024</span>
<span class="t clipr" style="left:1558.50px;top:595.18px;font-size:10.6px;color:#4e4e4e;transform:scaleX(0.8562);">Lu</span>
<span class="t clipr" style="left:1558.50px;top:609.68px;font-size:10.6px;color:#4e4e4e;transform:scaleX(0.8933);">th</span>
<span class="t" style="left:128.60px;top:676.30px;font-size:10.6px;color:#fff;-webkit-text-stroke:0.2px #fff;">1</span>
<span class="t" style="left:155.90px;top:676.30px;font-size:10.6px;color:#333;-webkit-text-stroke:0.2px #333;">2</span>
<span class="t" style="left:180.95px;top:676.30px;font-size:10.6px;color:#333;-webkit-text-stroke:0.2px #333;">3</span>
<span class="t" style="left:206.00px;top:676.30px;font-size:10.6px;color:#333;-webkit-text-stroke:0.2px #333;">4</span>
<span class="t" style="left:231.05px;top:676.30px;font-size:10.6px;color:#333;-webkit-text-stroke:0.2px #333;">5</span>
<span class="t" style="left:256.50px;top:676.30px;font-size:10.6px;color:#333;letter-spacing:0.078px;-webkit-text-stroke:0.2px #333;">...</span>
<span class="t" style="left:341.40px;top:675.90px;font-size:10.6px;color:#555;letter-spacing:0.203px;">50</span>
<span class="t" style="left:387.70px;top:675.60px;font-size:11.2px;color:#555;letter-spacing:0.030px;">items per page</span>
<span class="t" style="left:1463.70px;top:675.40px;font-size:10.6px;color:#555;letter-spacing:0.231px;">1 - 50 of 983 items</span>
<span class="t" style="left:1519.50px;top:16.90px;font-size:11.2px;color:#444;-webkit-text-stroke:0.3px #444;">?</span>
</div>
<div id="gspacer" class="a"></div>
<div id="vscroll" class="a"><i></i></div><div id="hscroll" class="a"><i></i></div><div id="corner" class="a"></div>
<svg class="a" style="left:69.2px;top:656.6px" width="3.6" height="6.2" viewBox="0 0 3.6 6.2"><path d="M3.6 0L0 3.1L3.6 6.2z" fill="#505050"/></svg>
<svg class="a" style="left:1557.6px;top:656.6px" width="3.6" height="6.2" viewBox="0 0 3.6 6.2"><path d="M0 0L3.6 3.1L0 6.2z" fill="#202020"/></svg>
<svg class="a" style="left:1569.2px;top:242.4px" width="5.6" height="3.2" viewBox="0 0 7 4"><path d="M0 4L3.5 0L7 4z" fill="#a3a3a3"/></svg>
<svg class="a" style="left:1569.2px;top:644.4px" width="5.6" height="3.2" viewBox="0 0 7 4"><path d="M0 0L3.5 4L7 0z" fill="#404040"/></svg>
<div class="a" style="left:1578px;top:182px;width:1px;height:526px;background:#d3d5e0"></div>
<div class="a" style="left:1579px;top:180px;width:18px;height:530px;background:#f9f9f9"></div>
</body>
</html>
